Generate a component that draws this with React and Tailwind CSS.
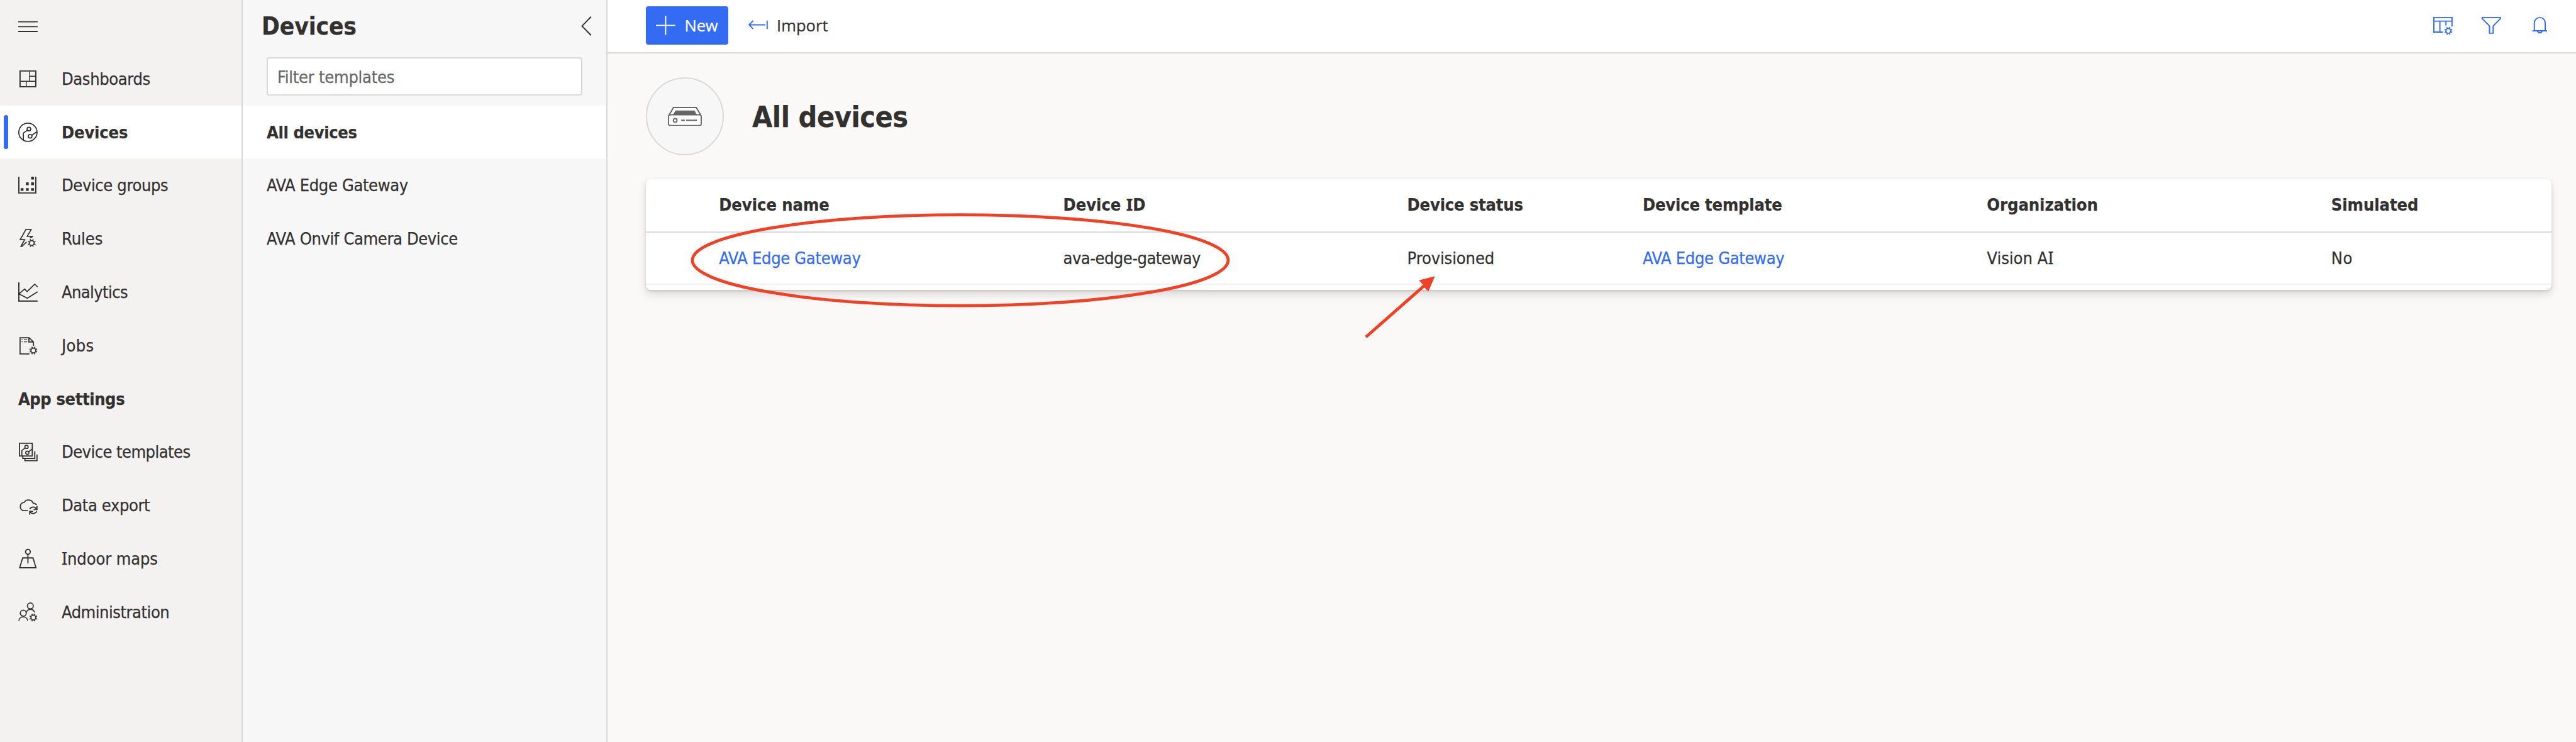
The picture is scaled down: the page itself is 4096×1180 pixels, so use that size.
function Glyph({ children, color = "stroke-[#323130]" }) {
  return (
    <svg viewBox="0 0 32 32" className={`h-[30.8px] w-[30.8px] shrink-0 overflow-visible fill-none stroke-2 ${color}`}>
      {children}
    </svg>
  );
}

const TEETH = [22.5, 67.5, 112.5, 157.5, 202.5, 247.5, 292.5, 337.5];

function Gear({ x, y }) {
  return (
    <g transform={`translate(${x} ${y})`}>
      <circle r="4" />
      {TEETH.map((angle) => (
        <path key={angle} d="M4.5 0H6.7" transform={`rotate(${angle})`} />
      ))}
    </g>
  );
}

function SerifI() {
  return <span className="font-['Noto_Sans',sans-serif] leading-[0]">I</span>;
}

const icons = {
  dashboards: (
    <>
      <path d="M3 3H29V29H3Z" />
      <path d="M18.6 3V20M3 20H29M18.6 11.7H29M13.4 20V29" strokeWidth="1.4" />
    </>
  ),
  devices: (
    <g strokeWidth="1.8">
      <circle cx="16" cy="16" r="15.1" />
      <circle cx="17.7" cy="10.7" r="3" />
      <circle cx="19.7" cy="22.7" r="3" />
      <path d="M15.2 12.4L8.5 17.3V29M22.3 21.1L30.8 15" />
    </g>
  ),
  groups: (
    <>
      <path d="M1 2V29H29V2" />
      <path
        d="M4 21h4.7v4.4H4zM12.7 21h4.6v4.4h-4.6zM21.3 21H26v4.4h-4.7zM12.7 11.4h4.6v4.6h-4.6zM21.3 11.4H26V16h-4.7zM21.3 2H26v4.7h-4.7z"
        className="fill-[#323130] stroke-none"
      />
    </>
  ),
  rules: (
    <g strokeWidth="1.8">
      <path d="M19.5 14.8L24.4 12.4H14.9L21.3 1.1H12.6L3.2 17.9H10.6L4.4 29.1H6L13.6 21.6" />
      <Gear x={22.3} y={23.3} />
    </g>
  ),
  analytics: (
    <>
      <path d="M1 0V31H32" />
      <path d="M1.5 18.8L10.5 11L14.7 15.3L27.3 3L32 7.8M1.5 19.2L15 26.3L32 15.7" strokeWidth="1.8" />
    </>
  ),
  jobs: (
    <g strokeWidth="1.8">
      <path d="M18.5 30H3V3.2H18L25.2 10.3V16.5M17.6 3V10.2H25" />
      <path d="M5.4 6.6H7.2M9.3 6.6H14.8M5.4 10H7.2M9.3 10H14.8" strokeWidth="1.5" />
      <Gear x={25} y={24.3} />
    </g>
  ),
  templates: (
    <g strokeWidth="1.9">
      <path d="M2 2H23.2V23H2Z" />
      <circle cx="13.7" cy="8" r="2.7" strokeWidth="1.7" />
      <circle cx="15" cy="17.7" r="2.7" strokeWidth="1.7" />
      <path d="M11.4 9.7L6 14V23M17.2 16L23 11.5" strokeWidth="1.7" />
      <path d="M27.3 15V27H7.5V23.5M31 20.5V30.8H11V27" />
    </g>
  ),
  export: (
    <g strokeWidth="1.8">
      <path d="M16 25H8.2A7 7 0 0 1 9.8 11.4A8.3 8.3 0 0 1 24.6 12.6A6.6 6.6 0 0 1 30.4 16" />
      <path d="M18.9 22.3A6.6 6.6 0 0 1 30.4 22.4M31 17.6V23.3H25.4M30.6 26.2A6.6 6.6 0 0 1 19.2 26.8M18.9 31.8V26H24.5" />
    </g>
  ),
  maps: (
    <g strokeWidth="1.9">
      <circle cx="16" cy="4.8" r="4" />
      <path d="M16 8.8V24M7.4 14.8H24.4L29.3 31H2.3Z" />
    </g>
  ),
  admin: (
    <g strokeWidth="1.8">
      <circle cx="20" cy="5.8" r="4.9" />
      <circle cx="8.3" cy="17.8" r="4.9" />
      <path d="M1 30A7.4 7.4 0 0 1 15.6 30M13.4 16.6A7.2 7.2 0 0 1 27 16.4" />
      <Gear x={25} y={25} />
    </g>
  ),
};

function NavItem({ icon, active, children, tracking }) {
  return (
    <a className={`flex h-[84.8px] shrink-0 items-center ${active ? "bg-white font-bold" : ""}`}>
      <span className={`ml-[5.8px] h-[54px] w-[7.7px] rounded-full ${active ? "bg-[#336bf3]" : ""}`} />
      <span className="ml-[15.4px] flex">
        <Glyph>{icons[icon]}</Glyph>
      </span>
      <span className={`ml-[38.3px] ${tracking}`}>{children}</span>
    </a>
  );
}

function Sidebar() {
  return (
    <nav className="flex w-[386px] shrink-0 flex-col border-r-2 border-[#d9d9d9] bg-[#f3f2f1]">
      <div className="flex h-[82.9px] shrink-0 items-center pl-[28.9px]">
        <Glyph>
          <path d="M0 9H32M0 17H32M0 25H32" />
        </Glyph>
      </div>
      <NavItem icon="dashboards" tracking="tracking-[-0.36px]">Dashboards</NavItem>
      <NavItem icon="devices" active tracking="tracking-[-0.12px]">Devices</NavItem>
      <NavItem icon="groups" tracking="tracking-[-0.35px]">Device groups</NavItem>
      <NavItem icon="rules" tracking="tracking-normal">Rules</NavItem>
      <NavItem icon="analytics" tracking="tracking-[-0.58px]">Analytics</NavItem>
      <NavItem icon="jobs" tracking="tracking-[0.37px]">Jobs</NavItem>
      <h2 className="flex h-[84.8px] shrink-0 items-center pl-[28.9px] font-bold tracking-[-0.36px]">App settings</h2>
      <NavItem icon="templates" tracking="tracking-[-0.53px]">Device templates</NavItem>
      <NavItem icon="export" tracking="tracking-[-0.37px]">Data export</NavItem>
      <NavItem icon="maps" tracking="tracking-[-0.1px]"><SerifI />ndoor maps</NavItem>
      <NavItem icon="admin" tracking="tracking-[-0.46px]">Administration</NavItem>
    </nav>
  );
}

function TemplatePanel() {
  return (
    <aside className="flex w-[580px] shrink-0 flex-col border-r-2 border-[#d9d9d9] bg-[#f7f7f7]">
      <div className="flex h-[82.9px] shrink-0 items-center justify-between pr-[23px] pl-[30px]">
        <h1 className="pt-[2px] text-[38.55px] font-bold tracking-[-0.09px]">Devices</h1>
        <svg viewBox="0 0 18 34" className="h-[32.8px] w-[17.3px] fill-none stroke-[#323130] stroke-2">
          <path d="M16.5 1.5L1.5 17L16.5 32.5" />
        </svg>
      </div>
      <div className="flex h-[84.8px] shrink-0 pt-[7.7px] pr-[38.5px] pl-[38px]">
        <div className="flex h-[61.7px] w-full items-center rounded-[4px] border-2 border-[#d9d9d9] bg-white pt-[3px] pl-[15px] tracking-[-0.24px] text-[#666666]">
          Filter templates
        </div>
      </div>
      <a className="flex h-[84.8px] shrink-0 items-center bg-white pl-[38px] font-bold tracking-[-0.34px]">All devices</a>
      <a className="flex h-[84.8px] shrink-0 items-center pl-[38px] tracking-[-0.34px]">AVA Edge Gateway</a>
      <a className="flex h-[84.8px] shrink-0 items-center pl-[38px] tracking-[-0.36px]">AVA Onvif Camera Device</a>
    </aside>
  );
}

function Toolbar() {
  return (
    <header className="flex h-[85px] shrink-0 items-center border-b-2 border-[#d9d9d9] bg-white pr-[42.4px] pb-[2px] pl-[61.4px] font-['Open_Sans',sans-serif] text-[25.6px]">
      <button className="flex h-[61.7px] w-[131px] items-center gap-[15px] rounded-[4px] bg-[#336bf3] pl-[15.4px] tracking-[-0.2px] text-white">
        <Glyph color="stroke-white">
          <path d="M0 16H32M16 0V32" />
        </Glyph>
        New
      </button>
      <button className="ml-[31.4px] flex items-center gap-[14.5px]">
        <Glyph color="stroke-[#336bf3]">
          <path d="M7.7 8.3L1.2 15L7.7 21.7M1.2 15H28M31 8V22" />
        </Glyph>
        Import
      </button>
      <div className="ml-auto flex gap-[46.3px]">
        <Glyph color="stroke-[#336bf3]">
          <path d="M16 27H1V3H31V18M1 9H31M11 9V27M21 9V16" />
          <Gear x={25} y={25} />
        </Glyph>
        <Glyph color="stroke-[#336bf3]">
          <path d="M1 3H31V4.8L19 17V29H13V17L1 4.8Z" />
        </Glyph>
        <Glyph color="stroke-[#336bf3]">
          <path d="M7 25V12A9 9 0 0 1 25 12V25M4 25H28M12.4 25.4A3.7 3.7 0 0 0 19.6 25.4" />
        </Glyph>
      </div>
    </header>
  );
}

function DeviceBadge() {
  return (
    <div className="flex h-[123.4px] w-[123.4px] items-center justify-center rounded-full border-2 border-[#d9d9d9] bg-[#f7f7f7]">
      <svg viewBox="0 0 56 32" className="h-[30.8px] w-[54px] fill-white stroke-[#666666] stroke-2">
        <path d="M1.8 13.5L9.2 1H46.8L54.2 13.5" />
        <path d="M8.5 13L12.5 6H44L47.8 13Z" className="fill-[#666666] stroke-none" />
        <rect x="1" y="13" width="54" height="18" rx="3" />
        <circle cx="12" cy="22.3" r="3" />
        <path d="M22 22H28M30 22H48" />
      </svg>
    </div>
  );
}

const columns = "grid grid-cols-[547.4px_547px_374.4px_547.4px_547.4px_1fr] items-center pl-[115.8px]";

function DeviceTable() {
  return (
    <section className="mt-[38.5px] flex h-[175.4px] w-[3030px] flex-col overflow-hidden rounded-[7.7px] bg-white shadow-[0_6.2px_13.9px_rgba(0,0,0,0.132),0_1.2px_3.5px_rgba(0,0,0,0.108)]">
      <div className={`${columns} h-[84.8px] border-b-2 border-[#d9d9d9] pb-[2px] font-bold`}>
        <span>Device name</span>
        <span>Device <SerifI />D</span>
        <span className="tracking-[-0.14px]">Device status</span>
        <span className="tracking-[-0.14px]">Device template</span>
        <span>Organization</span>
        <span>Simulated</span>
      </div>
      <div className={`${columns} h-[82.9px] border-b-2 border-[#f3f2f1]`}>
        <a className="tracking-[-0.31px] text-[#336bf3]">AVA Edge Gateway</a>
        <span className="tracking-[-0.5px]">ava-edge-gateway</span>
        <span className="tracking-[-0.1px]">Provisioned</span>
        <a className="tracking-[-0.31px] text-[#336bf3]">AVA Edge Gateway</a>
        <span>Vision A<SerifI /></span>
        <span className="tracking-[0.6px]">No</span>
      </div>
    </section>
  );
}

// Red callouts laid over the page
function Annotations() {
  return (
    <svg viewBox="0 0 4250 1224" preserveAspectRatio="none" className="pointer-events-none absolute inset-0 h-full w-full fill-none stroke-[#ee4126] stroke-[5]">
      <ellipse cx="1584.3" cy="429.3" rx="442" ry="75" />
      <path d="M2253.5 556L2350 471" />
      <path d="M2367.5 455.5L2341 462.5L2348 470L2349 473L2356.5 481Z" className="fill-[#ee4126] stroke-none" />
    </svg>
  );
}

export default function App() {
  return (
    <div className="relative flex h-[1180px] w-[4096px] overflow-hidden bg-[#faf9f8] font-['DejaVu_Sans_Condensed','Noto_Sans',sans-serif] text-[27px] leading-none whitespace-nowrap text-[#323130] [-webkit-text-stroke:0.25px]">
      <Sidebar />
      <TemplatePanel />
      <div className="flex min-w-0 grow flex-col">
        <Toolbar />
        <main className="flex flex-col pt-[38.4px] pl-[61.4px]">
          <div className="flex items-center gap-[45.3px]">
            <DeviceBadge />
            <h2 className="pt-[2px] text-[46.3px] font-bold tracking-[-0.45px]">All devices</h2>
          </div>
          <DeviceTable />
        </main>
      </div>
      <Annotations />
    </div>
  );
}
